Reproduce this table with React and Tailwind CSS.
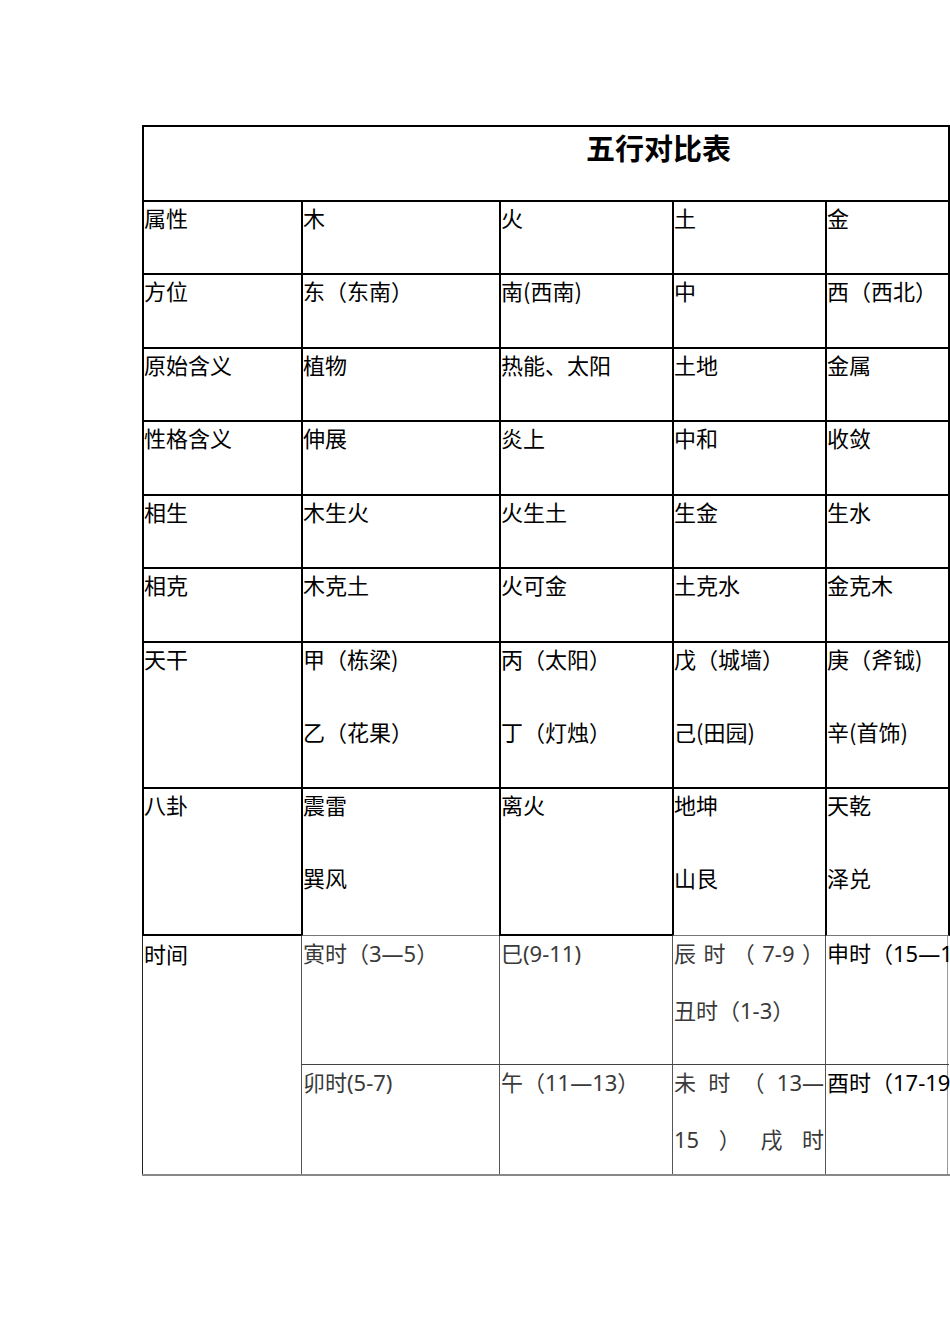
import React from "react";

const F = { fontFamily: '"Noto Sans CJK SC", "Noto Sans", sans-serif' };
const F2 = { fontFamily: '"Noto Sans", "Noto Sans CJK SC", sans-serif' };

const W = ["w-[159px]", "w-[198px]", "w-[173px]", "w-[153px]", "w-[125px]"];

const rows = [
  { h: "h-[73px]", cells: [["属性"], ["木"], ["火"], ["土"], ["金"]] },
  { h: "h-[74px]", cells: [["方位"], ["东（东南）"], ["南(西南)"], ["中"], ["西（西北）"]] },
  { h: "h-[73px]", cells: [["原始含义"], ["植物"], ["热能、太阳"], ["土地"], ["金属"]] },
  { h: "h-[74px]", cells: [["性格含义"], ["伸展"], ["炎上"], ["中和"], ["收敛"]] },
  { h: "h-[73px]", cells: [["相生"], ["木生火"], ["火生土"], ["生金"], ["生水"]] },
  { h: "h-[74px]", cells: [["相克"], ["木克土"], ["火可金"], ["土克水"], ["金克木"]] },
  {
    h: "h-[146px]",
    cells: [["天干"], ["甲（栋梁)", "乙（花果）"], ["丙（太阳）", "丁（灯烛）"], ["戊（城墙）", "己(田园)"], ["庚（斧钺)", "辛(首饰)"]],
  },
];

function Cell({ i, lines, extra = "" }) {
  return (
    <div className={`${W[i]} h-full shrink-0 border-l-2 border-t-2 border-black text-[22px] text-black whitespace-nowrap ${i === 4 ? "border-r-2" : ""} ${extra}`}>
      {lines.map((t, k) => (
        <div key={k} className="h-[73px] leading-[30px]">{t}</div>
      ))}
    </div>
  );
}

function TCell({ w, lines, dark, last }) {
  return (
    <div className={`${w} h-full shrink-0 border-l border-[#555] pl-px text-[22px] whitespace-nowrap ${dark ? "text-black" : "text-[#3a3a3a]"} ${last ? "border-r border-r-[#999]" : ""}`} style={F2}>
      {lines.map((t, k) => (
        <div key={k} className="h-[57px] leading-[34px]">
          {Array.isArray(t) ? (
            <div className="flex justify-between pr-[1px]">
              {t.map((s, j) => (
                <span key={j}>{s}</span>
              ))}
            </div>
          ) : (
            t
          )}
        </div>
      ))}
    </div>
  );
}

export default function App() {
  return (
    <div className="w-[950px] h-[1344px] overflow-hidden bg-white" style={F}>
      <div className="pt-[125px] pl-[142px]">
        {/* title */}
        <div className="w-[808px] h-[75px] border-l-2 border-t-2 border-r-2 border-black">
          <div className="pl-[442px] text-[29px] font-bold leading-[40px] text-black">五行对比表</div>
        </div>
        {rows.map((r, ri) => (
          <div key={ri} className={`flex ${r.h}`}>
            {r.cells.map((c, i) => (
              <Cell key={i} i={i} lines={c} />
            ))}
          </div>
        ))}
        {/* 八卦 */}
        <div className="flex h-[149px]">
          <Cell i={0} lines={["八卦"]} extra="border-b-2" />
          <Cell i={1} lines={["震雷", "巽风"]} extra="border-b border-b-[#777]" />
          <Cell i={2} lines={["离火"]} extra="border-b-2" />
          <Cell i={3} lines={["地坤", "山艮"]} extra="border-b border-b-[#777]" />
          <Cell i={4} lines={["天乾", "泽兑"]} extra="border-b border-b-[#777]" />
        </div>
        {/* 时间 */}
        <div className="flex w-[900px] h-[240px] border-b-2 border-[#888]">
          <div className="w-[159px] shrink-0 h-full border-l border-[#222] pl-px text-[22px] leading-[34px] text-black">时间</div>
          <div className="flex flex-col h-full">
            <div className="flex h-[129px] border-b border-[#444] w-[648px]">
              <TCell w="w-[198px]" lines={["寅时（3—5）"]} />
              <TCell w="w-[173px]" lines={["巳(9-11)"]} />
              <TCell w="w-[153px]" lines={[["辰", "时", "（", "7-9", "）"], "丑时（1-3）"]} />
              <TCell w="w-[123px]" lines={["申时（15—17）"]} dark last />
            </div>
            <div className="flex h-[109px]">
              <TCell w="w-[198px]" lines={["卯时(5-7)"]} />
              <TCell w="w-[173px]" lines={["午（11—13）"]} />
              <TCell w="w-[153px]" lines={[["未", "时", "（", "13—"], ["15", "）", "戌", "时"]]} />
              <TCell w="w-[123px]" lines={["酉时（17-19）"]} dark last />
            </div>
          </div>
        </div>
      </div>
    </div>
  );
}
